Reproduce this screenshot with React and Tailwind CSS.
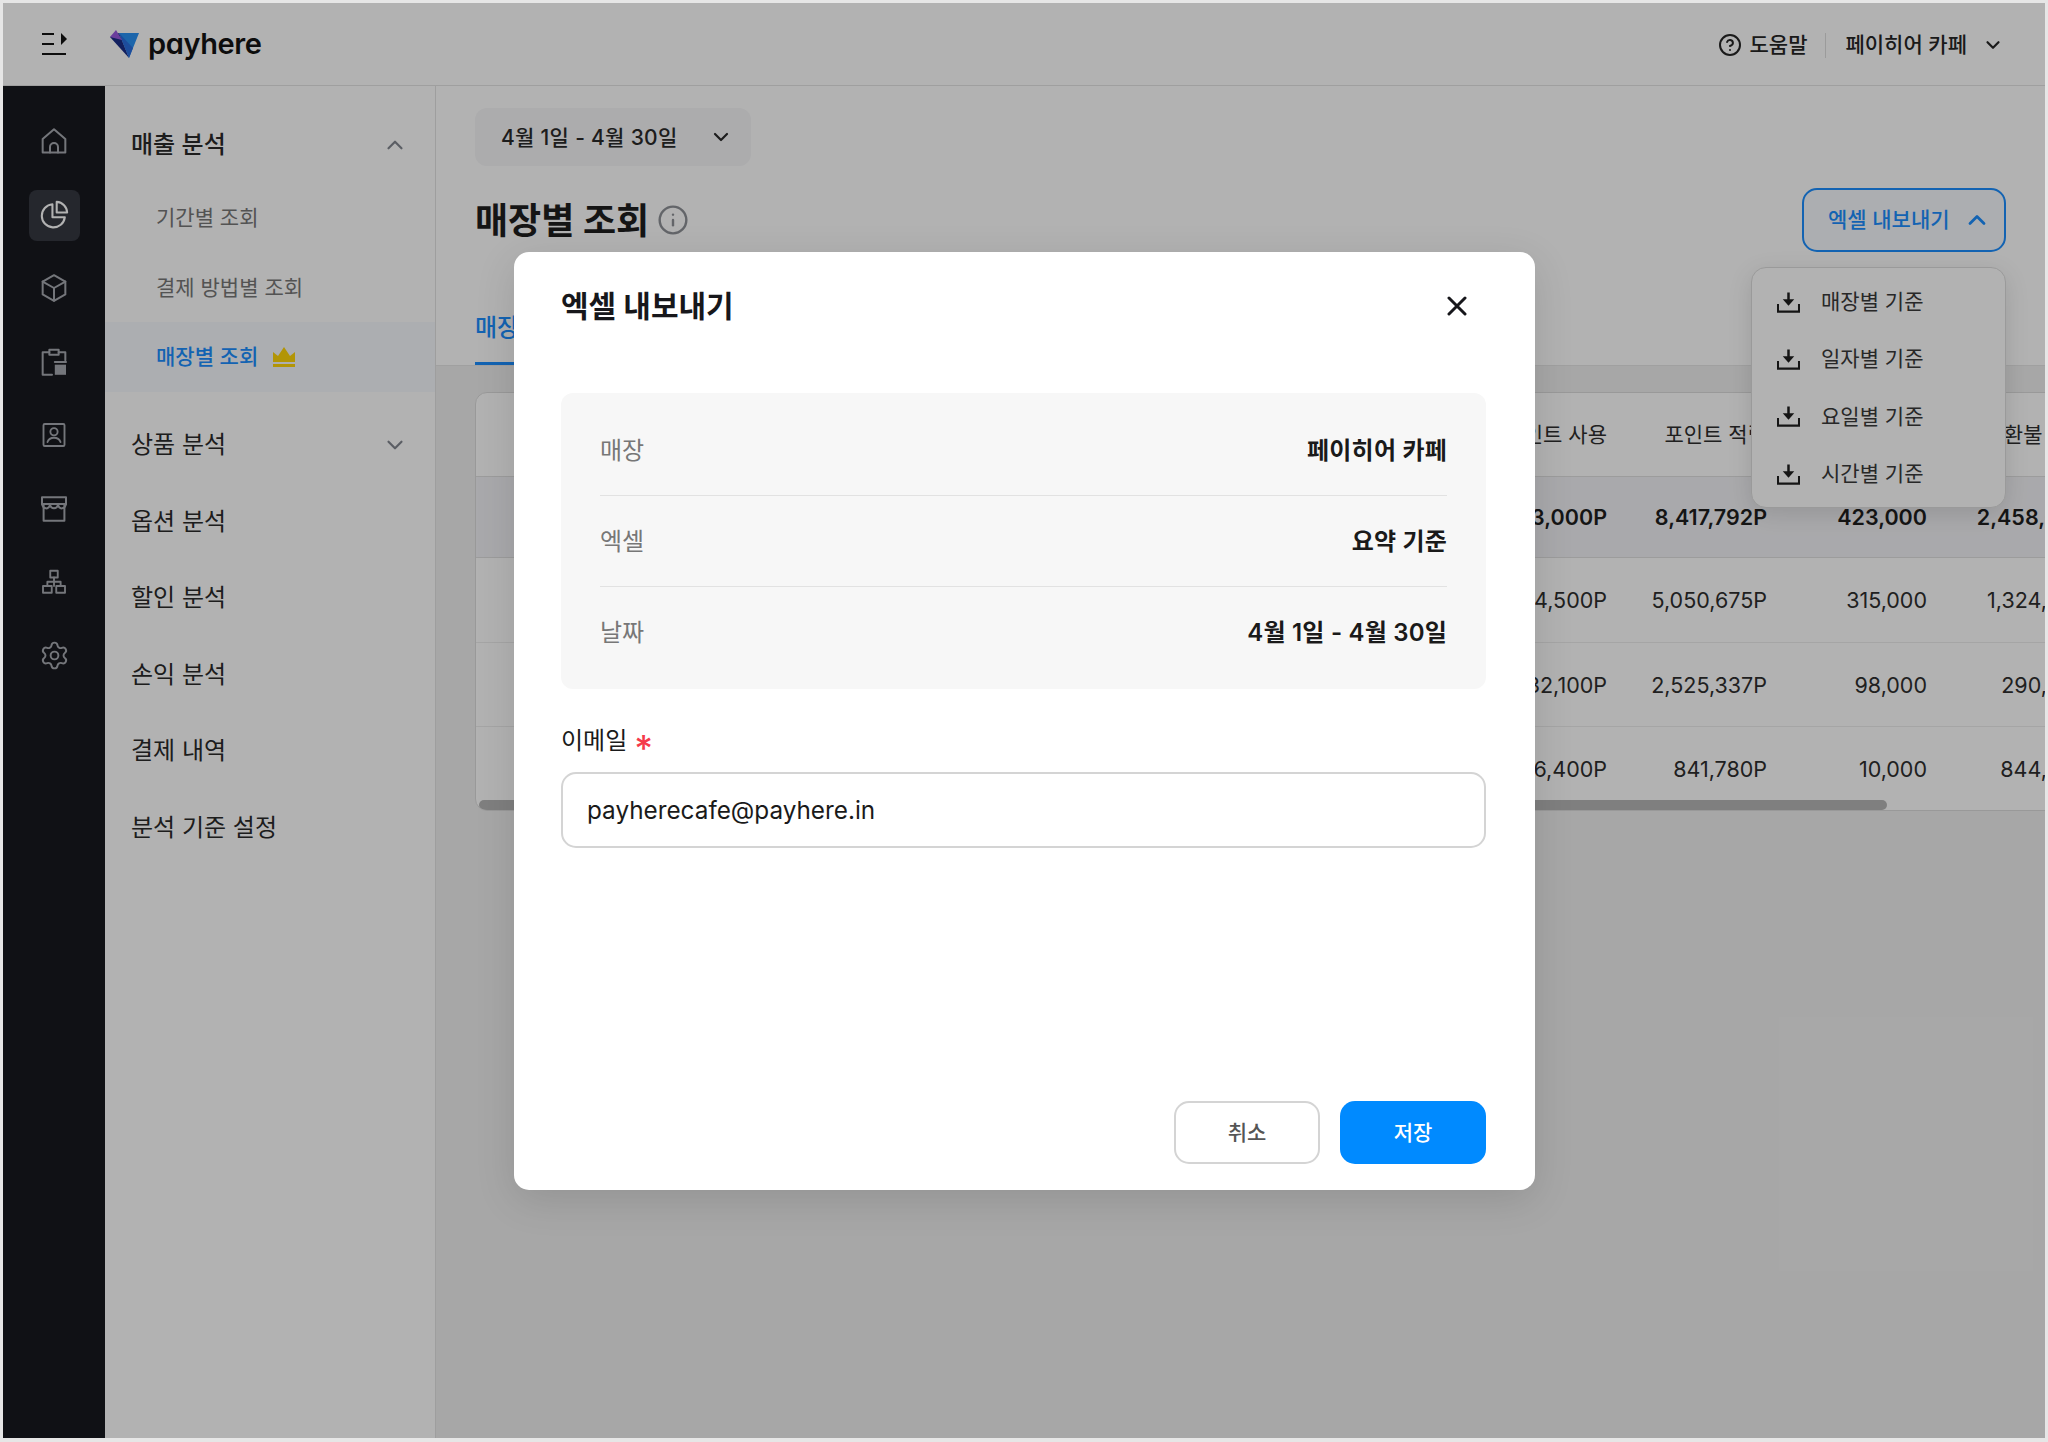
import React from 'react';
import { ChevronDown, ChevronUp, CircleHelp, Info, Settings } from 'lucide-react';

const Stroke = ({ children, className = '', size = 32 }) => (
  <svg width={size} height={size} viewBox="0 0 24 24" fill="none" stroke="currentColor" strokeWidth="1.5" strokeLinejoin="round" strokeLinecap="round" className={className}>
    {children}
  </svg>
);

const railIcons = [
  <Stroke key="home"><path d="M3.500 10.500 12 3.200l8.500 7.300v10.200h-17z" /><path d="M9 20.700v-4.200a3 3 0 0 1 6 0v4.200" /></Stroke>,
  <Stroke key="pie" size={33}><path d="M10.500 4.600a8.400 8.400 0 1 0 9 9.400h-9z" /><path d="M13.600 2.800a8 8 0 0 1 7.600 7.800h-7.600z" /></Stroke>,
  <Stroke key="cube"><path d="M12 2.400 20.500 7.200v9.600L12 21.600l-8.500-4.800V7.200z" /><path d="M3.500 7.200 12 12l8.500-4.800M12 12v9.600" /></Stroke>,
  <Stroke key="clip"><path d="M8.500 4.600H3.500v17h7" /><path d="M15.500 4.600h5v6" /><path d="M8.500 2.800h7v3.800h-7z" /><rect x="12.600" y="14" width="8.400" height="7.600" fill="currentColor" stroke="none" /><path d="M12.600 12h8.400" /></Stroke>,
  <Stroke key="contact" size={30}><rect x="3.600" y="3.200" width="16.800" height="17.600" rx="1" /><circle cx="12" cy="9.400" r="2.900" /><path d="M6.800 17.600c.8-2.400 2.800-3.400 5.200-3.400s4.400 1 5.200 3.400" /></Stroke>,
  <Stroke key="store"><path d="M3 3.200h18v5H3z" /><path d="M4.200 8.200v12.600h15.600V8.200" /><path d="M3 8.200c1 4.300 5 4.300 6 .8 1 3.300 5 3.300 6 0 1 3.500 5 3.500 6-.8" /></Stroke>,
  <Stroke key="tree" size={30}><rect x="9" y="3" width="6" height="5.400" /><rect x="3.200" y="15.200" width="7" height="5.400" /><rect x="13.800" y="15.200" width="7" height="5.400" /><path d="M12 8.400v6.800M6.700 15.200v-3.400h10.600v3.400" /></Stroke>,
  <Settings key="gear" size={31} strokeWidth={1.5} />,
];

const Download = () => (
  <svg width="23" height="22" viewBox="0 0 24 22" fill="none" className="shrink-0">
    <path d="M1 13v8h22v-8" stroke="currentColor" strokeWidth="2.200" />
    <path d="M10.700 1h2.600v7h4.700L12 15 6 8h4.700z" fill="currentColor" />
  </svg>
);

const subItems = ['기간별 조회', '결제 방법별 조회'];
const mainItems = ['옵션 분석', '할인 분석', '손익 분석', '결제 내역', '분석 기준 설정'];

const rows = [
  ['183,000P', '8,417,792P', '423,000', '2,458,000'],
  ['64,500P', '5,050,675P', '315,000', '1,324,000'],
  ['132,100P', '2,525,337P', '98,000', '290,000'],
  ['26,400P', '841,780P', '10,000', '844,000'],
];

const gridCols = 'grid grid-cols-[971px_160px_160px_160px_160px] items-center';

export default function App() {
  return (
    <div className="w-[2048px] h-[1442px] bg-[#e6e6e6] pt-[3px] pl-[3px] pr-[3px] pb-[4px] font-['Inter','Noto_Sans_CJK_KR',sans-serif] text-[21px] text-[#2a2a2a]">
      <div className="relative w-full h-full overflow-hidden bg-[#f0f0f0] flex flex-col">
        {/* top bar */}
        <header className="h-[83px] shrink-0 bg-white border-b border-[#e4e4e4] flex items-center pl-[39px] pr-[41px]">
          <svg width="26" height="24" viewBox="0 0 26 24" className="text-[#141414] shrink-0" fill="currentColor">
            <rect x="0" y="1" width="12" height="2" />
            <rect x="0" y="11" width="12" height="2" />
            <rect x="0" y="21" width="24" height="2" />
            <path d="M19 1l6 6-6 6z" />
          </svg>
          <svg width="29" height="29" viewBox="0 0 29 29" className="ml-[42px] shrink-0">
            <path d="M9 3h20l-10 25z" fill="#2a93f5" />
            <path d="M0 7l19 21L9 3z" fill="#1b2f88" />
            <path d="M9 3l10 25 4-10z" fill="#2a6fe0" />
            <path d="M0 7l6-7 6 10z" fill="#9a5ae0" />
          </svg>
          <span className="ml-[9px] pb-[2px] text-[29px] leading-none font-semibold text-[#141414] tracking-[-0.4px] font-['Inter',sans-serif] [font-feature-settings:'cv11']">payhere</span>
          <div className="ml-auto pt-[2px] flex items-center font-medium text-[#262626]">
            <CircleHelp size={24} strokeWidth={2} />
            <span className="ml-[8px]">도움말</span>
            <span className="ml-[18px] mr-[19px] w-px h-[25px] bg-[#dedede]" />
            <span>페이히어 카페</span>
            <ChevronDown size={22} strokeWidth={2.4} className="ml-[15px]" />
          </div>
        </header>

        <div className="flex flex-1 min-h-0">
          {/* rail */}
          <nav className="w-[102px] shrink-0 bg-[#18191f] pt-[30px] px-[26px] flex flex-col gap-[22.5px] text-[#a7aab0]">
            {railIcons.map((icon, i) => (
              <div key={i} className={`w-[51px] h-[51px] shrink-0 rounded-[8px] pr-[1px] pb-[1px] flex items-center justify-center ${i === 1 ? 'bg-[#353841] text-white' : ''}`}>
                {icon}
              </div>
            ))}
          </nav>

          {/* sidebar */}
          <aside className="w-[331px] shrink-0 bg-white border-r border-[#e2e2e2] pt-[20px] text-[24px] font-normal">
            <div className="h-[76px] pt-[2px] flex items-center justify-between pl-[26px] pr-[27px] font-medium">
              <span>매출 분석</span>
              <ChevronUp size={26} strokeWidth={2} className="text-[#838790]" />
            </div>
            {subItems.map((s) => (
              <div key={s} className="h-[70px] pt-[2px] flex items-center pl-[51px] text-[21px] text-[#777777]">{s}</div>
            ))}
            <div className="h-[70px] flex items-center pl-[51px] text-[21px] font-medium text-[#1c8fff] bg-[#f7f9fe]">
              매장별 조회
              <svg width="22" height="20" viewBox="0 0 22 20" className="ml-[15px]">
                <path d="M0 5l5 4 6-9 6 9 5-4v10H0z" fill="#ffd60a" />
                <rect x="0" y="17" width="22" height="3" fill="#ffd60a" />
              </svg>
            </div>
            <div className="mt-[14px] h-[76.500px] pt-[2px] flex items-center justify-between pl-[26px] pr-[27px]">
              <span>상품 분석</span>
              <ChevronDown size={26} strokeWidth={2} className="text-[#838790]" />
            </div>
            {mainItems.map((s) => (
              <div key={s} className="h-[76.500px] pt-[2px] flex items-center pl-[26px]">{s}</div>
            ))}
          </aside>

          {/* main */}
          <main className="relative flex-1 min-w-0 overflow-hidden">
            <div className="bg-white border-b border-[#e6e6e6] px-[39px] pt-[22px]">
              <div className="w-[276px] h-[58px] rounded-[12px] bg-[#f6f6f8] flex items-center justify-between pl-[26px] pr-[18px] font-medium tracking-[0.3px]">
                <span className="pt-[2px]">4월 1일 - 4월 30일</span>
                <ChevronDown size={24} strokeWidth={2.2} />
              </div>
              <div className="mt-[22px] h-[64px] flex items-center justify-between">
                <div className="flex items-center">
                  <h1 className="pt-[2px] text-[36px] font-bold text-[#1f1f1f]">매장별 조회</h1>
                  <Info size={32} strokeWidth={1.8} className="ml-[8px] text-[#8e9197]" />
                </div>
                <div className="w-[204px] h-[64px] rounded-[15px] border-2 border-[#1c8fff] bg-[#f7f9fe] text-[#1c8fff] font-medium flex items-center pl-[24px]">
                  엑셀 내보내기
                  <ChevronUp size={28} strokeWidth={2.4} className="ml-[13px]" />
                </div>
              </div>
              <div className="mt-[40px] h-[73px] pt-[2px] w-[140px] flex items-center border-b-[3px] border-[#1c8fff] text-[#1c8fff] text-[24px] font-medium">매장별</div>
            </div>

            <div className="relative mt-[26px] ml-[39px] w-[1613px] h-[419px] rounded-[12px] border border-[#dcdcdc] bg-white overflow-hidden text-[#2e2e2e]">
              <div className={`${gridCols} h-[84px] border-b border-[#e0e0e0] text-right`}>
                <span />
                <span>포인트 사용</span>
                <span>포인트 적립</span>
                <span>할인 금액</span>
                <span>환불 금액</span>
              </div>
              {rows.map((r, i) => (
                <div key={i} className={`${gridCols} text-right text-[21.500px] ${i === 0 ? 'h-[81px] bg-[#f3f3f6] font-semibold border-b border-[#e0e0e0] text-[#1f1f1f]' : i === 1 ? 'h-[85px] border-b border-[#ededed]' : 'h-[84px] pt-[2px] border-b border-[#ededed]'}`}>
                  <span />
                  {r.map((v) => <span key={v}>{v}</span>)}
                </div>
              ))}
              <div className="absolute left-[3px] bottom-0 w-[1408px] h-[10px] rounded-full bg-[#b7b7b7]" />
            </div>

            {/* export dropdown */}
            <div className="absolute top-[181px] right-[39px] w-[255px] h-[241px] rounded-[15px] border border-[#dddddd] bg-white shadow-[0_6px_24px_rgba(0,0,0,0.12)] pt-[5px] pl-[25px] text-[#3a3a3a]">
              {['매장별 기준', '일자별 기준', '요일별 기준', '시간별 기준'].map((s) => (
                <div key={s} className="h-[57.400px] flex items-center gap-[21px]">
                  <span className="text-[#1f1f1f] flex"><Download /></span>
                  {s}
                </div>
              ))}
            </div>
          </main>
        </div>

        {/* dim layer */}
        <div className="absolute inset-0 bg-black/30" />

        {/* modal */}
        <div className="absolute left-[510.500px] top-[249px] w-[1021.500px] h-[938px] rounded-[15px] bg-white shadow-[0_10px_40px_rgba(0,0,0,0.12)] pl-[47.500px] pr-[49px] pt-[34px] pb-[26px] flex flex-col text-[#1a1a1a]">
          <div className="h-[40px] flex items-center justify-between">
            <h2 className="text-[30px] font-bold text-[#17171b]">엑셀 내보내기</h2>
            <svg width="20" height="20" viewBox="0 0 20 20" className="mr-[19px]" stroke="#17171b" strokeWidth="3" strokeLinecap="round">
              <path d="M2 2l16 16M18 2L2 18" />
            </svg>
          </div>
          <div className="mt-[67px] rounded-[12px] bg-[#f7f7f7] px-[39px] pt-[12px] pb-[11px] text-[24px]">
            {[['매장', '페이히어 카페'], ['엑셀', '요약 기준'], ['날짜', '4월 1일 - 4월 30일']].map(([k, v], i) => (
              <div key={k} className={`h-[91px] flex items-center justify-between ${i < 2 ? 'pt-[2px] border-b border-[#e2e2e2]' : 'pt-[1px]'}`}>
                <span className="text-[#777777]">{k}</span>
                <span className="font-semibold text-[#1a1a1a] tracking-[0.2px]">{v}</span>
              </div>
            ))}
          </div>
          <div className="mt-[34px] h-[36px] flex items-center text-[24px]">
            이메일
            <span className="ml-[7px] text-[36px] leading-none font-medium text-[#f53a4b] pt-[14px]">*</span>
          </div>
          <div className="mt-[13px] h-[76px] rounded-[15px] border-2 border-[#d4d4d4] flex items-center pl-[24px] text-[24.300px]">
            payherecafe@payhere.in
          </div>
          <div className="mt-auto flex justify-end gap-[20px] font-medium">
            <div className="w-[146px] h-[63px] rounded-[15px] border-2 border-[#d4d4d4] text-[#555555] flex items-center justify-center">취소</div>
            <div className="w-[146px] h-[63px] rounded-[15px] bg-[#008aff] text-white flex items-center justify-center">저장</div>
          </div>
        </div>
      </div>
    </div>
  );
}
